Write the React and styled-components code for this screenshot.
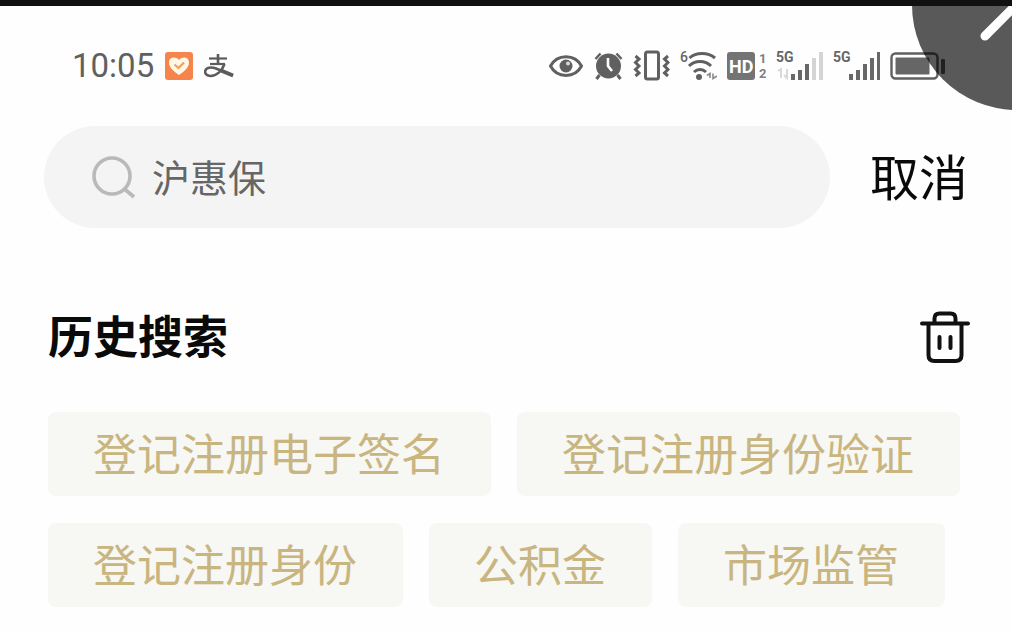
import { useState } from "react";
import styled, { createGlobalStyle } from "styled-components";

const historyItems = [
  "登记注册电子签名",
  "登记注册身份验证",
  "登记注册身份",
  "公积金",
  "市场监管",
];

export default function App() {
  const [keyword, setKeyword] = useState("");
  const [items, setItems] = useState(historyItems);

  return (
    <Page>
      <GlobalStyle />
      <TopEdge />
      <StatusBar>
        <StatusGroup $gap={11}>
          <Clock>10:05</Clock>
          <HeartBadge />
          <PayIcon />
        </StatusGroup>
        <StatusGroup $gap={10}>
          <EyeIcon />
          <AlarmIcon />
          <VibrateIcon />
          <WifiIcon />
          <HdIcon />
          <SignalIcon weak />
          <SignalIcon />
          <BatteryIcon />
        </StatusGroup>
      </StatusBar>

      <SearchRow onSubmit={(e) => e.preventDefault()}>
        <SearchField>
          <SearchIcon />
          <SearchInput
            type="text"
            aria-label="搜索"
            placeholder="沪惠保"
            value={keyword}
            onChange={(e) => setKeyword(e.target.value)}
          />
        </SearchField>
        <CancelButton type="button" onClick={() => setKeyword("")}>
          取消
        </CancelButton>
      </SearchRow>

      <History>
        <HistoryHeader>
          <HistoryTitle>历史搜索</HistoryTitle>
          <IconButton
            type="button"
            aria-label="清空"
            onClick={() => setItems([])}
          >
            <TrashIcon />
          </IconButton>
        </HistoryHeader>
        <TagList>
          {items.map((item) => (
            <li key={item}>
              <Tag type="button" onClick={() => setKeyword(item)}>
                {item}
              </Tag>
            </li>
          ))}
        </TagList>
      </History>

      <FloatingButton type="button" aria-label="展开">
        <svg width="210" height="210" viewBox="0 0 210 210" fill="none">
          <path d="M73 136 L112 97" stroke="#fff" strokeWidth="9" strokeLinecap="round" />
        </svg>
      </FloatingButton>
    </Page>
  );
}

function HeartBadge() {
  return (
    <svg width="28" height="28" viewBox="0 0 28 28">
      <rect width="28" height="28" rx="3" fill="#f5854a" />
      <path
        d="M14 23 C8 19 4 15 4 10.500 C4 5 10.500 4 14 8 C17.500 4 24 5 24 10.500 C24 15 20 19 14 23Z"
        fill="#fff6e6"
      />
      <path d="M9.500 12.500 L13.500 16 L19 10.500" stroke="#f0a25c" strokeWidth="2.200" fill="none" />
    </svg>
  );
}

function PayIcon() {
  return (
    <svg width="30" height="28" viewBox="0 0 30 28" fill="none" stroke="#5c5c5c">
      <path d="M14 2 V12" strokeWidth="2.600" />
      <path d="M5 6.500 H23" strokeWidth="2.200" />
      <path d="M6 12 H21" strokeWidth="2.200" />
      <path
        d="M20.500 12 C18 19 12.500 24 6.500 24 C2.500 24 .8 21.500 1.200 19 C2 15.500 7 14.500 12 16.500 L29 23.500"
        strokeWidth="2.600"
      />
      <path d="M17 18.500 L29 23.500" strokeWidth="4" />
    </svg>
  );
}

function EyeIcon() {
  return (
    <svg width="35" height="30" viewBox="0 0 35 30" fill="none" stroke="#606060">
      <path d="M2.500 15 C9 2.500 27 2.500 33.500 15 C27 27.500 9 27.500 2.500 15Z" strokeWidth="3" />
      <circle cx="18" cy="15" r="6.500" fill="#606060" stroke="none" />
      <circle cx="20" cy="12.500" r="2" fill="#d8d8d8" stroke="none" />
    </svg>
  );
}

function AlarmIcon() {
  return (
    <svg width="30" height="30" viewBox="0 0 30 30" fill="none" stroke="#606060">
      <circle cx="15.500" cy="15" r="12.500" fill="#606060" stroke="none" />
      <path d="M2.500 8 L7.500 2.500 M28.500 8 L23.500 2.500" strokeWidth="2.500" />
      <path d="M6.500 24 L3.500 28 M24.500 24 L27.500 28" strokeWidth="3" />
      <path d="M15 7 V15 L19 20" stroke="#fff" strokeWidth="2.600" />
    </svg>
  );
}

function VibrateIcon() {
  return (
    <svg width="37" height="32" viewBox="0 0 37 32" fill="none" stroke="#606060">
      <rect x="12.500" y="2" width="13" height="27" rx="2" strokeWidth="3" />
      <path
        d="M2.500 6 L6 9 L2.500 12.500 L6 16 L2.500 19.500 L6 23 L2.500 26"
        strokeWidth="3"
      />
      <path
        d="M35 6 L31.500 9 L35 12.500 L31.500 16 L35 19.500 L31.500 23 L35 26"
        strokeWidth="3"
      />
    </svg>
  );
}

function WifiIcon() {
  return (
    <svg width="37" height="32" viewBox="0 0 37 32" fill="none" stroke="#606060">
      <Glyph x="0" y="12" $size={14}>6</Glyph>
      <path d="M9.500 8 C16 2 28 2 35 8" strokeWidth="3" />
      <path d="M9 16 C15 10 25 10 31 16" strokeWidth="3" />
      <path d="M14 22 C17.500 18.500 22.500 18.500 26 22" strokeWidth="3" />
      <circle cx="19" cy="27" r="3" fill="#606060" stroke="none" />
      <path d="M27 25.500 L30 23.500 V28 M33 23.500 V28.500 L37 26" strokeWidth="1.600" stroke="#8a8a8a" />
    </svg>
  );
}

function HdIcon() {
  return (
    <svg width="39" height="30" viewBox="0 0 39 30">
      <rect x="0" y="1" width="28" height="28" rx="3" fill="#747474" />
      <Glyph x="2" y="22" $size={18} $color="#fff" $bold>HD</Glyph>
      <Glyph x="32" y="12" $size={13} $color="#808080" $bold>1</Glyph>
      <Glyph x="32" y="27" $size={13} $color="#808080" $bold>2</Glyph>
    </svg>
  );
}

function SignalIcon({ weak }) {
  const bars = [6, 10, 16, 22, 28];
  return (
    <svg width="47" height="32" viewBox="0 0 47 32">
      <Glyph x="0" y="12" $size={14} $bold>5G</Glyph>
      {weak && (
        <path
          d="M2 21 L5 19 V28 M11 19 V28 L8 25"
          stroke="#d8d8d8"
          strokeWidth="2"
          fill="none"
        />
      )}
      {bars.map((height, i) => (
        <rect
          key={height}
          x={16 + i * 7 - (weak ? 1 : 0)}
          y={30 - height}
          width="4"
          height={height}
          fill={weak && i > 2 ? "#d4d4d4" : "#686868"}
        />
      ))}
    </svg>
  );
}

function BatteryIcon() {
  return (
    <svg width="56" height="30" viewBox="0 0 56 30">
      <rect x="1.500" y="2.500" width="46" height="25" rx="4" fill="none" stroke="#606060" strokeWidth="2.400" />
      <rect x="5.500" y="6.500" width="34" height="17" rx="1" fill="#666" />
      <rect x="51" y="8" width="4" height="15" rx="1" fill="#606060" />
    </svg>
  );
}

function SearchIcon() {
  return (
    <svg width="44" height="44" viewBox="0 0 44 44" fill="none" stroke="#b9b9b9" strokeWidth="3.600">
      <circle cx="20" cy="21" r="18" />
      <path d="M32.500 34 L42 42" />
    </svg>
  );
}

function TrashIcon() {
  return (
    <svg width="50" height="54" viewBox="0 0 50 54" fill="none" stroke="#111" strokeWidth="4" strokeLinecap="round">
      <path d="M2 13.500 H48" />
      <path d="M14.500 13 V8.500 Q14.500 3.500 19.500 3.500 H30.500 Q35.500 3.500 35.500 8.500 V13" />
      <path d="M8.500 14 V45 Q8.500 51 14.500 51 H35.500 Q41.500 51 41.500 45 V14" />
      <path d="M19.500 27 V38 M30.500 27 V38" />
    </svg>
  );
}

const GlobalStyle = createGlobalStyle`
  * {
    box-sizing: border-box;
  }

  body {
    margin: 0;
    background: #fefefe;
    font-family: "Noto Sans CJK SC", sans-serif;
  }

  button,
  input {
    padding: 0;
    border: none;
    background: none;
    font-family: inherit;
  }

  button {
    cursor: pointer;
  }

  svg {
    display: block;
    flex-shrink: 0;
  }
`;

const Page = styled.div`
  position: relative;
  min-height: 100vh;
  overflow: hidden;
  background: #fefefe;
`;

const TopEdge = styled.div`
  position: relative;
  z-index: 2;
  height: 6px;
  background: #111;
`;

const StatusBar = styled.div`
  display: flex;
  align-items: center;
  justify-content: space-between;
  height: 120px;
  padding: 0 66px 0 72px;
`;

const StatusGroup = styled.div`
  display: flex;
  align-items: center;
  gap: ${(props) => props.$gap}px;
`;

const Clock = styled.span`
  color: #606060;
  font-family: Roboto, sans-serif;
  font-size: 33px;
  line-height: 40px;
`;

const Glyph = styled.text`
  fill: ${(props) => props.$color || "#666"};
  stroke: none;
  font-family: Roboto, sans-serif;
  font-size: ${(props) => props.$size}px;
  font-weight: ${(props) => (props.$bold ? 700 : 500)};
`;

const SearchRow = styled.form`
  display: flex;
  align-items: center;
  gap: 40px;
  padding: 0 44px;
`;

const SearchField = styled.div`
  display: flex;
  flex: 1;
  align-items: center;
  gap: 16px;
  min-width: 0;
  height: 102px;
  padding: 0 48px;
  border-radius: 51px;
  background: #f4f4f4;
`;

const SearchInput = styled.input`
  flex: 1;
  min-width: 0;
  height: 60px;
  padding-bottom: 4px;
  outline: none;
  color: #333;
  font-size: 38px;

  &::placeholder {
    color: #666;
    opacity: 1;
  }
`;

const CancelButton = styled.button`
  padding-bottom: 4px;
  color: #0a0a0a;
  font-size: 49px;
  line-height: 72px;
  white-space: nowrap;
`;

const History = styled.section`
  padding: 80px 42px 24px 48px;
`;

const HistoryHeader = styled.div`
  display: flex;
  align-items: center;
  justify-content: space-between;
  height: 58px;
  margin-bottom: 46px;
`;

const HistoryTitle = styled.h2`
  margin: 0;
  padding-bottom: 4px;
  color: #0a0a0a;
  font-size: 45px;
  font-weight: 700;
  line-height: 54px;
`;

const IconButton = styled.button`
  display: flex;
`;

const TagList = styled.ul`
  display: flex;
  flex-wrap: wrap;
  gap: 27px 26px;
  margin: 0;
  padding: 0;
  list-style: none;
`;

const Tag = styled.button`
  display: block;
  padding: 0 46px 4px 45px;
  border-radius: 8px;
  background: #f7f7f3;
  color: #c8b580;
  font-size: 44px;
  line-height: 80px;
`;

const FloatingButton = styled.button`
  position: absolute;
  top: -100px;
  right: -110px;
  z-index: 1;
  width: 210px;
  height: 210px;
  border-radius: 50%;
  background: rgba(0, 0, 0, 0.65);
`;
